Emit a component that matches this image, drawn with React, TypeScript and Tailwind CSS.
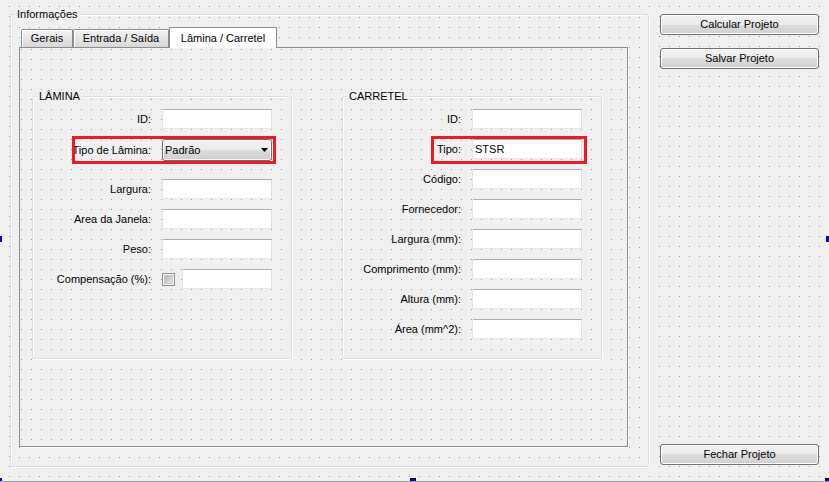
import type { ReactNode } from "react";

// designer grid: one 1px dot every 10px
const DOTS =
  "bg-[conic-gradient(from_0deg_at_1px_1px,transparent_0_270deg,#9d9d9d_270deg_360deg)] bg-size-[10px_10px]";

const BTN =
  "h-[21px] w-full flex items-center justify-center rounded-[3px] border border-[#707070] bg-[linear-gradient(#f2f2f2,#ebebeb_50%,#dddddd_50%,#cfcfcf)] shadow-[inset_0_0_0_1px_#fcfcfc] text-black";

function TextField({ value, className = "w-[110px]" }: { value?: string; className?: string }) {
  return (
    <div
      className={`${className} h-[20px] flex items-center px-[2px] bg-white border border-[#e3e9ef] border-t-[#abadb3] border-l-[#e2e3ea] border-r-[#dbdfe6] rounded-[2px]`}
    >
      {value}
    </div>
  );
}

function Combo({ value }: { value: string }) {
  return (
    <div className="w-[110px] h-[22px] flex items-center justify-between pl-[2px] pr-[3px] rounded-[3px] border border-[#707070] bg-[linear-gradient(#f2f2f2,#ebebeb_50%,#dddddd_50%,#cfcfcf)] shadow-[inset_0_0_0_1px_#fcfcfc]">
      <span>{value}</span>
      <svg width="7" height="4" viewBox="0 0 7 4">
        <path d="M0 0h7L3.5 4z" fill="#000" />
      </svg>
    </div>
  );
}

function CheckBox() {
  return (
    <div className="w-[13px] h-[13px] border border-[#8e8f8f] bg-[#f4f4f4] p-[1px]">
      <div className="w-full h-full bg-[linear-gradient(135deg,#b0b4b9,#e6e6e6)] border border-[#c9cbce]" />
    </div>
  );
}

function Row({ label, mt, h = "h-[20px]", children }: { label: string; mt: string; h?: string; children: ReactNode }) {
  return (
    <div className={`${mt} ${h} flex items-center justify-end gap-[11px]`}>
      <span className="whitespace-nowrap">{label}</span>
      {children}
    </div>
  );
}

function GroupBox({ title, children }: { title: string; children: ReactNode }) {
  return (
    <div className="relative w-[260px] h-[263px] border border-[#d5dfe5] rounded-[3px] shadow-[inset_1px_1px_0_#fff,1px_1px_0_#fff]">
      <span className="absolute left-[4px] top-[-7px] px-[2px] leading-[13px] bg-[#f0f0f0]">{title}</span>
      <div className="flex flex-col pt-[12px] pr-[19px]">{children}</div>
    </div>
  );
}

function RedMark({ className }: { className: string }) {
  return <div className={`absolute h-[28px] border-[3px] border-[#ed1c24] pointer-events-none ${className}`} />;
}

export default function App() {
  return (
    <div
      className={`relative w-[829px] h-[482px] overflow-hidden border-b border-[#a0a0a0] bg-[#f0f0f0] ${DOTS} bg-position-[9px_6px] font-['Liberation_Sans',Arial,sans-serif] text-[11px] text-black`}
    >
      <div className="flex pl-[10px] pt-[14px] gap-[11px]">
        {/* Informações group */}
        <div
          className={`relative w-[639px] h-[453px] border border-[#d5dfe5] rounded-[3px] shadow-[inset_1px_1px_0_#fff,1px_1px_0_#fff] bg-[#f0f0f0] ${DOTS} bg-position-[8px_2px] pl-[8px] pt-[12px]`}
        >
          <span className="absolute left-[4px] top-[-7px] px-[2px] leading-[13px] bg-[#f0f0f0]">Informações</span>

          <div className="h-[20px] flex items-end pl-[2px]">
            <div className="w-[52px] h-[18px] flex items-center justify-center border border-b-0 border-[#898c95] rounded-t-[2px] bg-linear-to-b from-[#f3f3f3] to-[#d8d8d8] shadow-[inset_1px_1px_0_#fff]">
              Gerais
            </div>
            <div className="w-[96px] h-[18px] flex items-center justify-center border border-b-0 border-[#898c95] rounded-t-[2px] bg-linear-to-b from-[#f3f3f3] to-[#d8d8d8] shadow-[inset_1px_1px_0_#fff]">
              Entrada / Saída
            </div>
            <div className="relative z-10 w-[108px] h-[21px] -mb-[1px] flex items-center justify-center border border-b-0 border-[#898c95] rounded-t-[2px] bg-white">
              Lâmina / Carretel
            </div>
          </div>

          <div
            className={`w-[609px] h-[400px] border border-[#898c95] shadow-[1px_1px_0_#fff] bg-[#f0f0f0] ${DOTS} bg-position-[1px_1px] flex gap-[50px] pl-[12px] pt-[48px]`}
          >
            <GroupBox title="LÂMINA">
              <Row label="ID:" mt="mt-0">
                <TextField />
              </Row>
              <Row label="Tipo de Lâmina:" mt="mt-[10px]" h="h-[22px]">
                <Combo value="Padrão" />
              </Row>
              <Row label="Largura:" mt="mt-[18px]">
                <TextField />
              </Row>
              <Row label="Area da Janela:" mt="mt-[10px]">
                <TextField />
              </Row>
              <Row label="Peso:" mt="mt-[10px]">
                <TextField />
              </Row>
              <Row label="Compensação (%):" mt="mt-[10px]">
                <div className="w-[110px] flex items-center gap-[7px]">
                  <CheckBox />
                  <TextField className="w-[90px]" />
                </div>
              </Row>
              <RedMark className="left-[39px] top-[39px] w-[204px]" />
            </GroupBox>

            <GroupBox title="CARRETEL">
              <Row label="ID:" mt="mt-0">
                <TextField />
              </Row>
              <Row label="Tipo:" mt="mt-[10px]">
                <TextField value="STSR" />
              </Row>
              <Row label="Código:" mt="mt-[10px]">
                <TextField />
              </Row>
              <Row label="Fornecedor:" mt="mt-[10px]">
                <TextField />
              </Row>
              <Row label="Largura (mm):" mt="mt-[10px]">
                <TextField />
              </Row>
              <Row label="Comprimento (mm):" mt="mt-[10px]">
                <TextField />
              </Row>
              <Row label="Altura (mm):" mt="mt-[10px]">
                <TextField />
              </Row>
              <Row label="Área (mm^2):" mt="mt-[10px]">
                <TextField />
              </Row>
              <RedMark className="left-[88px] top-[39px] w-[156px]" />
            </GroupBox>
          </div>
        </div>

        {/* actions */}
        <div className="w-[159px] h-[452px] flex flex-col">
          <button className={BTN}>Calcular Projeto</button>
          <button className={`${BTN} mt-[13px]`}>Salvar Projeto</button>
          <button className={`${BTN} mt-auto mb-[1px]`}>Fechar Projeto</button>
        </div>
      </div>

      {/* designer resize handles */}
      <div className="absolute left-0 top-[236px] w-[2px] h-[6px] bg-[#0000ff]" />
      <div className="absolute right-0 top-[236px] w-[3px] h-[6px] bg-[#0000ff]" />
      <div className="absolute left-0 bottom-[-1px] w-[2px] h-[4px] bg-[#0000ff]" />
      <div className="absolute left-[410px] bottom-[-1px] w-[6px] h-[4px] border border-b-0 border-black bg-[#0000ff]" />
      <div className="absolute right-0 bottom-[-1px] w-[4px] h-[4px] border-l border-t border-black bg-[#0000ff]" />
    </div>
  );
}
